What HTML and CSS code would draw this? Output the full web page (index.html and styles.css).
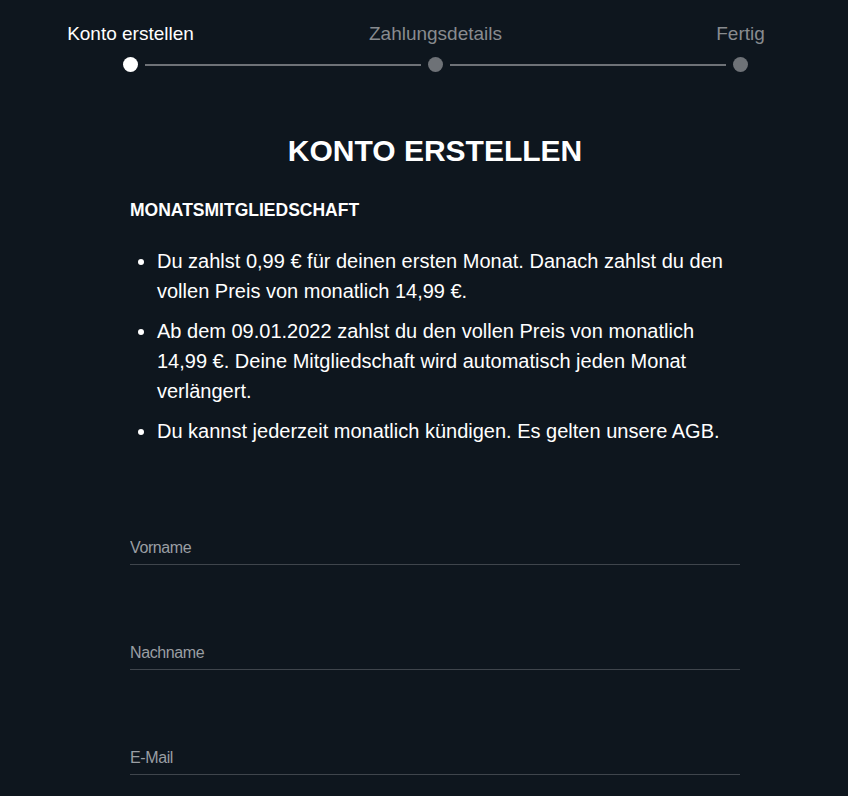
FILE: index.html
```html
<!DOCTYPE html>
<html lang="de">
  <head>
    <meta charset="UTF-8" />
    <meta name="viewport" content="width=device-width, initial-scale=1.0" />
    <title>Konto erstellen</title>
    <link rel="stylesheet" href="styles.css">
  </head>
  <body>
    <div class="page">
      <nav class="stepper">
        <div class="step active">
          <span class="step-label">Konto erstellen</span>
          <span class="step-dot"></span>
        </div>
        <span class="step-line"></span>
        <div class="step">
          <span class="step-label">Zahlungsdetails</span>
          <span class="step-dot"></span>
        </div>
        <span class="step-line"></span>
        <div class="step">
          <span class="step-label">Fertig</span>
          <span class="step-dot"></span>
        </div>
      </nav>

      <main>
        <h1>KONTO ERSTELLEN</h1>
        <h2>MONATSMITGLIEDSCHAFT</h2>
        <ul class="terms">
          <li>Du zahlst 0,99 € für deinen ersten Monat. Danach zahlst du den vollen Preis von monatlich 14,99 €.</li>
          <li>Ab dem 09.01.2022 zahlst du den vollen Preis von monatlich 14,99 €. Deine Mitgliedschaft wird automatisch jeden Monat verlängert.</li>
          <li>Du kannst jederzeit monatlich kündigen. Es gelten unsere AGB.</li>
        </ul>

        <form class="signup">
          <div class="field">
            <input type="text" id="firstname" placeholder="Vorname" />
          </div>
          <div class="field">
            <input type="text" id="lastname" placeholder="Nachname" />
          </div>
          <div class="field">
            <input type="email" id="email" placeholder="E-Mail" />
          </div>
        </form>
      </main>
    </div>
  </body>
</html>
```

FILE: styles.css
```css
body {
  font-family: "Liberation Sans", Arial, sans-serif;
  margin: 0;
  padding: 0;
  background-color: #0e161e;
  color: #ffffff;
}
.page {
  width: 610px;
  margin-left: 130px;
}
.stepper {
  display: flex;
  align-items: flex-end;
  margin: 0 -8px 0 -7px;
  padding-top: 23px;
}
.step {
  position: relative;
  width: 15px;
  height: 49px;
  display: flex;
  flex-direction: column;
  align-items: center;
  justify-content: flex-end;
}
.step-label {
  position: absolute;
  top: 0;
  left: 50%;
  transform: translateX(-50%);
  white-space: nowrap;
  font-size: 19px;
  line-height: 22px;
  color: #888b8f;
}
.step.active .step-label {
  color: #ffffff;
}
.step-dot {
  width: 15px;
  height: 15px;
  border-radius: 50%;
  background-color: #6e7277;
}
.step.active .step-dot {
  background-color: #ffffff;
}
.step-line {
  flex: 1;
  height: 2px;
  margin: 0 7px 6px;
  background-color: #6e7277;
}
main {
  padding-top: 57px;
}
h1 {
  margin: 0;
  text-align: center;
  font-size: 30px;
  font-weight: bold;
  line-height: 44px;
}
h2 {
  margin: 27px 0 0;
  font-size: 17.5px;
  font-weight: bold;
  line-height: 20px;
}
.terms {
  margin: 26px 0 0;
  padding-left: 27px;
  font-size: 20px;
  line-height: 30px;
}
.terms li {
  margin-bottom: 10px;
}
.terms li:last-child {
  margin-bottom: 0;
}
.signup {
  margin-top: 82px;
}
.field {
  margin-bottom: 68px;
}
.field:last-child {
  margin-bottom: 0;
}
.field input {
  display: block;
  width: 100%;
  box-sizing: border-box;
  padding: 10px 0 6px;
  font-family: inherit;
  font-size: 16px;
  letter-spacing: -0.4px;
  line-height: 20px;
  height: 37px;
  color: #ffffff;
  background: transparent;
  border: none;
  border-bottom: 1px solid #3f454c;
  outline: none;
}
.field input::placeholder {
  color: #9a9ea3;
}
```
